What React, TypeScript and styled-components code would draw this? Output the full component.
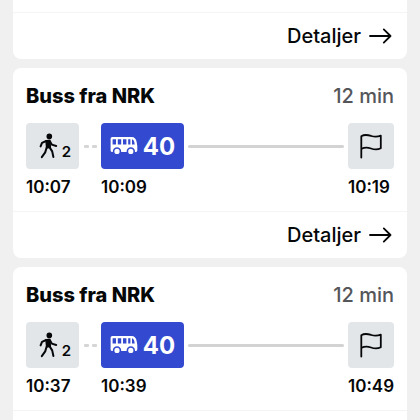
import React from "react";
import styled, { createGlobalStyle } from "styled-components";

const GlobalStyle = createGlobalStyle`
  * { box-sizing: border-box; }
  body {
    margin: 0;
    background: #f0f0f0;
    color: #060708;
    font-family: Inter, "Liberation Sans", sans-serif;
  }
`;

const Page = styled.main`
  height: 100vh;
  overflow: hidden;
  padding: 0 13px;
`;

const TripList = styled.div`
  display: flex;
  flex-direction: column;
  gap: 9px;
`;

const Card = styled.article<{ $continued?: boolean }>`
  background: #fff;
  border-radius: ${(p) => (p.$continued ? "0 0 8px 8px" : "8px")};
  padding-top: ${(p) => (p.$continued ? "12px" : "0")};
`;

const CardBody = styled.div`
  padding: 16px 13px 13px;
`;

const CardHeader = styled.header`
  display: flex;
  justify-content: space-between;
  align-items: center;
  margin-bottom: 15px;
  line-height: 24px;
`;

const Title = styled.h2`
  margin: 0;
  font-size: 20px;
  font-weight: 800;
`;

const Duration = styled.span`
  font-size: 20px;
  font-weight: 500;
  color: #54565a;
`;

const Legs = styled.div`
  display: flex;
  align-items: flex-start;
`;

const Leg = styled.div<{ $width: number }>`
  flex: none;
  width: ${(p) => p.$width}px;
`;

const LegBox = styled.div<{ $transit?: boolean }>`
  display: flex;
  align-items: center;
  justify-content: center;
  gap: 5px;
  height: 46px;
  border-radius: 4px;
  background: ${(p) => (p.$transit ? "#3349cf" : "#e3e6e8")};
  color: ${(p) => (p.$transit ? "#fff" : "inherit")};
`;

const WalkBox = styled(LegBox)`
  gap: 4px;
  padding-left: 5px;
`;

const WalkMinutes = styled.span`
  font-size: 15px;
  font-weight: 600;
  line-height: 18px;
  padding-top: 11px;
`;

const LineNumber = styled.span`
  font-size: 24px;
  font-weight: 700;
  line-height: 28px;
  padding-top: 2px;
`;

const Time = styled.time`
  display: block;
  margin-top: 7px;
  font-size: 17px;
  font-weight: 600;
  line-height: 22px;
  white-space: nowrap;
`;

const Dashes = styled.div`
  flex: none;
  display: flex;
  justify-content: center;
  align-items: center;
  gap: 3px;
  width: 22px;
  height: 46px;

  &::before,
  &::after {
    content: "";
    width: 5px;
    height: 3px;
    border-radius: 1px;
    background: #d6d6d6;
  }
`;

const Track = styled.div`
  flex: 1;
  display: flex;
  align-items: center;
  height: 46px;
  padding: 0 4px;

  &::before {
    content: "";
    flex: 1;
    height: 3px;
    border-radius: 2px;
    background: #d3d3d3;
  }
`;

const CardFooter = styled.footer`
  display: flex;
  justify-content: flex-end;
  min-height: 47px;
  border-top: 1px solid #f4f4f4;
  padding: 11px 15px;
`;

const DetailsLink = styled.a`
  display: flex;
  align-items: center;
  gap: 8px;
  color: inherit;
  text-decoration: none;
  font-size: 20px;
  font-weight: 500;
  line-height: 24px;
`;

const WalkIcon = () => (
  <svg width="19" height="26" viewBox="0 0 19 26" aria-hidden="true">
    <circle cx="10.3" cy="3.4" r="2.8" fill="currentColor" />
    <path d="M7 7.6 10.8 7.4 11.4 14.4 7.6 15Z" fill="currentColor" stroke="currentColor" strokeWidth="1.4" strokeLinejoin="round" />
    <path
      d="M7.2 8 3 9.8 1.6 13.4M11 8.4 12.8 11.6 17.2 13M7.6 14.8 6.2 19.4 2.8 24.2M10.6 14.4 13.2 18.4 14.4 24"
      fill="none"
      stroke="currentColor"
      strokeWidth="2"
      strokeLinecap="round"
      strokeLinejoin="round"
    />
  </svg>
);

const BusIcon = () => (
  <svg width="28" height="20" viewBox="0 0 28 20" aria-hidden="true">
    <path d="M2.4 1H21.5C24.6 1 26.2 3 26.7 6.2L27.3 10V14.6Q27.3 16 26 16H1.9Q.6 16 .6 14.6V2.8Q.6 1 2.4 1Z" fill="currentColor" />
    <path d="M3 3.2H6V8.4H2.6V3.6ZM7.8 3.2H11.2V8.4H7.8ZM13 3.2H16.4V8.4H13ZM18.2 3.2H20.4V8.4H18.2ZM22 3.3Q24.2 3.8 24.7 8.4H22Z" fill="#3349cf" />
    <circle cx="7" cy="15.4" r="3.4" fill="currentColor" stroke="#3349cf" strokeWidth="1.6" />
    <circle cx="20.8" cy="15.4" r="3.4" fill="currentColor" stroke="#3349cf" strokeWidth="1.6" />
  </svg>
);

const FlagIcon = () => (
  <svg width="24" height="26" viewBox="0 0 24 26" aria-hidden="true">
    <path
      d="M2.3 24.5V3.2C6 .9 9.2 2 12.2 3 15.4 4 18.2 4.2 21.8 2.7V15.2C18.2 17.2 15 16.6 12 15.5 8.8 14.4 5.8 14.1 2.3 16"
      fill="none"
      stroke="currentColor"
      strokeWidth="1.8"
      strokeLinecap="round"
      strokeLinejoin="round"
    />
  </svg>
);

const ArrowIcon = () => (
  <svg width="23" height="16" viewBox="0 0 23 16" aria-hidden="true">
    <path d="M1 8H21.5M14.8 1.4 21.5 8 14.8 14.6" fill="none" stroke="currentColor" strokeWidth="1.8" strokeLinecap="round" strokeLinejoin="round" />
  </svg>
);

const Details = () => (
  <DetailsLink href="#detaljer">
    Detaljer
    <ArrowIcon />
  </DetailsLink>
);

interface Trip {
  walk: string;
  board: string;
  arrive: string;
  hasDetails: boolean;
}

const trips: Trip[] = [
  { walk: "10:07", board: "10:09", arrive: "10:19", hasDetails: true },
  { walk: "10:37", board: "10:39", arrive: "10:49", hasDetails: false },
];

const TripCard = ({ walk, board, arrive, hasDetails }: Trip) => (
  <Card>
    <CardBody>
      <CardHeader>
        <Title>Buss fra NRK</Title>
        <Duration>12 min</Duration>
      </CardHeader>
      <Legs>
        <Leg $width={53}>
          <WalkBox>
            <WalkIcon />
            <WalkMinutes>2</WalkMinutes>
          </WalkBox>
          <Time>{walk}</Time>
        </Leg>
        <Dashes />
        <Leg $width={83}>
          <LegBox $transit>
            <BusIcon />
            <LineNumber>40</LineNumber>
          </LegBox>
          <Time>{board}</Time>
        </Leg>
        <Track />
        <Leg $width={46}>
          <LegBox>
            <FlagIcon />
          </LegBox>
          <Time>{arrive}</Time>
        </Leg>
      </Legs>
    </CardBody>
    <CardFooter>{hasDetails && <Details />}</CardFooter>
  </Card>
);

export default function App() {
  return (
    <>
      <GlobalStyle />
      <Page>
        <TripList>
          <Card $continued>
            <CardFooter>
              <Details />
            </CardFooter>
          </Card>
          {trips.map((trip) => (
            <TripCard key={trip.walk} {...trip} />
          ))}
        </TripList>
      </Page>
    </>
  );
}
